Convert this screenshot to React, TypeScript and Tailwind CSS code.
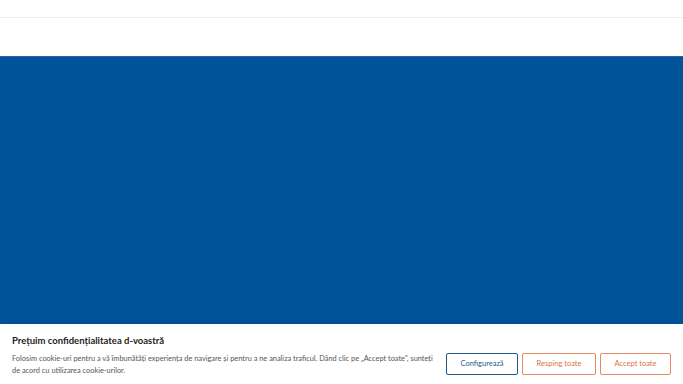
import React from 'react';

export default function App() {
  return (
    <div className="flex h-[384px] w-[683px] flex-col overflow-hidden bg-white font-['Lato',sans-serif]">
      {/* top nav strip */}
      <header className="h-[18px] border-b border-[#ececec] bg-white shadow-[0_1px_2px_rgba(0,0,0,0.04)]" />
      <div className="h-[38px] bg-white" />

      {/* hero */}
      <main className="flex-1 border-t border-[#2d6396] bg-[#00549a]" />

      {/* cookie banner */}
      <section className="flex h-[60px] items-start bg-white px-3 pt-[10px] shadow-[0_-2px_4px_rgba(0,0,0,0.08)]">
        <div className="flex-1">
          <h2 className="text-[9.5px] font-bold leading-[14px] text-[#222]">Prețuim confidențialitatea d-voastră</h2>
          <p className="mt-[5px] w-[426px] text-[7.4px] leading-[12px] text-[#555]">
            Folosim cookie-uri pentru a vă îmbunătăți experiența de navigare și pentru a ne analiza traficul. Dând clic pe „Accept toate", sunteți de acord cu utilizarea cookie-urilor.
          </p>
        </div>
        <div className="mt-[19px] flex gap-1">
          <button className="h-[22px] w-[72px] rounded-[2px] border border-[#1f5b8f] text-[7.5px] text-[#1f5b8f]">Configurează</button>
          <button className="h-[22px] w-[74px] rounded-[2px] border border-[#e58a5e] text-[7.5px] text-[#e0703f]">Resping toate</button>
          <button className="h-[22px] w-[71px] rounded-[2px] border border-[#e58a5e] text-[7.5px] text-[#e0703f]">Accept toate</button>
        </div>
      </section>
    </div>
  );
}
